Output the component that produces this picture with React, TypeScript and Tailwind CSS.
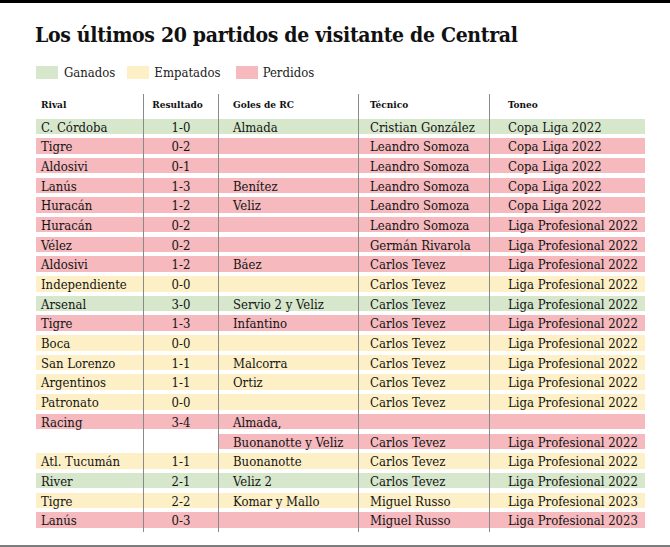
import React from 'react';

type Result = 'g' | 'e' | 'p';

interface Match {
  rival: string;
  score: string;
  goles: string;
  tecnico: string;
  torneo: string;
  res: Result;
  // celdas vacías (sin fondo) en rival y resultado
  blankLeft?: boolean;
}

const bandColor: Record<Result, string> = {
  g: 'bg-[#d6e7cc]',
  e: 'bg-[#fdf0c6]',
  p: 'bg-[#f5b9be]',
};

const matches: Match[] = [
  { rival: 'C. Córdoba', score: '1-0', goles: 'Almada', tecnico: 'Cristian González', torneo: 'Copa Liga 2022', res: 'g' },
  { rival: 'Tigre', score: '0-2', goles: '', tecnico: 'Leandro Somoza', torneo: 'Copa Liga 2022', res: 'p' },
  { rival: 'Aldosivi', score: '0-1', goles: '', tecnico: 'Leandro Somoza', torneo: 'Copa Liga 2022', res: 'p' },
  { rival: 'Lanús', score: '1-3', goles: 'Benítez', tecnico: 'Leandro Somoza', torneo: 'Copa Liga 2022', res: 'p' },
  { rival: 'Huracán', score: '1-2', goles: 'Veliz', tecnico: 'Leandro Somoza', torneo: 'Copa Liga 2022', res: 'p' },
  { rival: 'Huracán', score: '0-2', goles: '', tecnico: 'Leandro Somoza', torneo: 'Liga Profesional 2022', res: 'p' },
  { rival: 'Vélez', score: '0-2', goles: '', tecnico: 'Germán Rivarola', torneo: 'Liga Profesional 2022', res: 'p' },
  { rival: 'Aldosivi', score: '1-2', goles: 'Báez', tecnico: 'Carlos Tevez', torneo: 'Liga Profesional 2022', res: 'p' },
  { rival: 'Independiente', score: '0-0', goles: '', tecnico: 'Carlos Tevez', torneo: 'Liga Profesional 2022', res: 'e' },
  { rival: 'Arsenal', score: '3-0', goles: 'Servio 2 y Veliz', tecnico: 'Carlos Tevez', torneo: 'Liga Profesional 2022', res: 'g' },
  { rival: 'Tigre', score: '1-3', goles: 'Infantino', tecnico: 'Carlos Tevez', torneo: 'Liga Profesional 2022', res: 'p' },
  { rival: 'Boca', score: '0-0', goles: '', tecnico: 'Carlos Tevez', torneo: 'Liga Profesional 2022', res: 'e' },
  { rival: 'San Lorenzo', score: '1-1', goles: 'Malcorra', tecnico: 'Carlos Tevez', torneo: 'Liga Profesional 2022', res: 'e' },
  { rival: 'Argentinos', score: '1-1', goles: 'Ortiz', tecnico: 'Carlos Tevez', torneo: 'Liga Profesional 2022', res: 'e' },
  { rival: 'Patronato', score: '0-0', goles: '', tecnico: 'Carlos Tevez', torneo: 'Liga Profesional 2022', res: 'e' },
  { rival: 'Racing', score: '3-4', goles: 'Almada,', tecnico: '', torneo: '', res: 'p' },
  { rival: '', score: '', goles: 'Buonanotte y Veliz', tecnico: 'Carlos Tevez', torneo: 'Liga Profesional 2022', res: 'p', blankLeft: true },
  { rival: 'Atl. Tucumán', score: '1-1', goles: 'Buonanotte', tecnico: 'Carlos Tevez', torneo: 'Liga Profesional 2022', res: 'e' },
  { rival: 'River', score: '2-1', goles: 'Veliz 2', tecnico: 'Carlos Tevez', torneo: 'Liga Profesional 2022', res: 'g' },
  { rival: 'Tigre', score: '2-2', goles: 'Komar y Mallo', tecnico: 'Miguel Russo', torneo: 'Liga Profesional 2023', res: 'e' },
  { rival: 'Lanús', score: '0-3', goles: '', tecnico: 'Miguel Russo', torneo: 'Liga Profesional 2023', res: 'p' },
];

const serif = "font-['DejaVu_Serif_Condensed','DejaVu_Serif',serif] [font-stretch:condensed]";

const cols = [
  { w: 'w-[107px]', pad: 'pl-[5px]', head: 'Rival', align: 'text-left' },
  { w: 'w-[75px]', pad: '', head: 'Resultado', align: 'text-center' },
  { w: 'w-[140px]', pad: 'pl-[14px]', head: 'Goles de RC', align: 'text-left' },
  { w: 'w-[131px]', pad: 'pl-[11px]', head: 'Técnico', align: 'text-left' },
  { w: 'w-[156px]', pad: 'pl-[18px]', head: 'Toneo', align: 'text-left' },
];

function Cell({ i, text, bg }: { i: number; text: string; bg: string }) {
  const c = cols[i];
  return (
    <div className={`${c.w} h-[19.7px] ${i > 0 ? 'border-l border-[#8a8a8a]' : ''}`}>
      <div className={`h-[15.5px] ${bg} ${c.pad} ${c.align} text-[13px] leading-[18px] text-[#141414] whitespace-nowrap overflow-visible`}>
        {text}
      </div>
    </div>
  );
}

export default function App() {
  return (
    <div className={`w-[670px] h-[547px] bg-white border-t-[3px] border-black border-b-2 border-b-[#7d7d7d] ${serif} overflow-hidden`}>
      <h1 className="pl-[35px] pt-[20px] text-[21px] leading-[24px] font-bold tracking-[-0.015em] text-[#111]">
        Los últimos 20 partidos de visitante de Central
      </h1>

      <div className="flex items-center pl-[36px] mt-[16px] text-[13px] text-[#222]">
        <span className="w-[22px] h-[13px] bg-[#d6e7cc]" />
        <span className="ml-[6px]">Ganados</span>
        <span className="ml-[12px] w-[22px] h-[13px] bg-[#fdf0c6]" />
        <span className="ml-[5px]">Empatados</span>
        <span className="ml-[15px] w-[22px] h-[13px] bg-[#f5b9be]" />
        <span className="ml-[5px]">Perdidos</span>
      </div>

      <div className="ml-[36px] mt-[11px] w-[609px]">
        <div className="flex">
          {cols.map((c, i) => (
            <div
              key={c.head}
              className={`${c.w} h-[25px] ${i > 0 ? 'border-l border-[#8a8a8a]' : ''} ${c.pad} ${c.align} ${i === 1 ? 'pr-[7px]' : ''} text-[10px] font-bold leading-[22px] text-[#111]`}
            >
              {c.head}
            </div>
          ))}
        </div>
        {matches.map((m, r) => {
          const bg = bandColor[m.res];
          return (
            <div key={r} className="flex">
              <Cell i={0} text={m.rival} bg={m.blankLeft ? 'bg-white' : bg} />
              <Cell i={1} text={m.score} bg={m.blankLeft ? 'bg-white' : bg} />
              <Cell i={2} text={m.goles} bg={bg} />
              <Cell i={3} text={m.tecnico} bg={bg} />
              <Cell i={4} text={m.torneo} bg={bg} />
            </div>
          );
        })}
      </div>
    </div>
  );
}
